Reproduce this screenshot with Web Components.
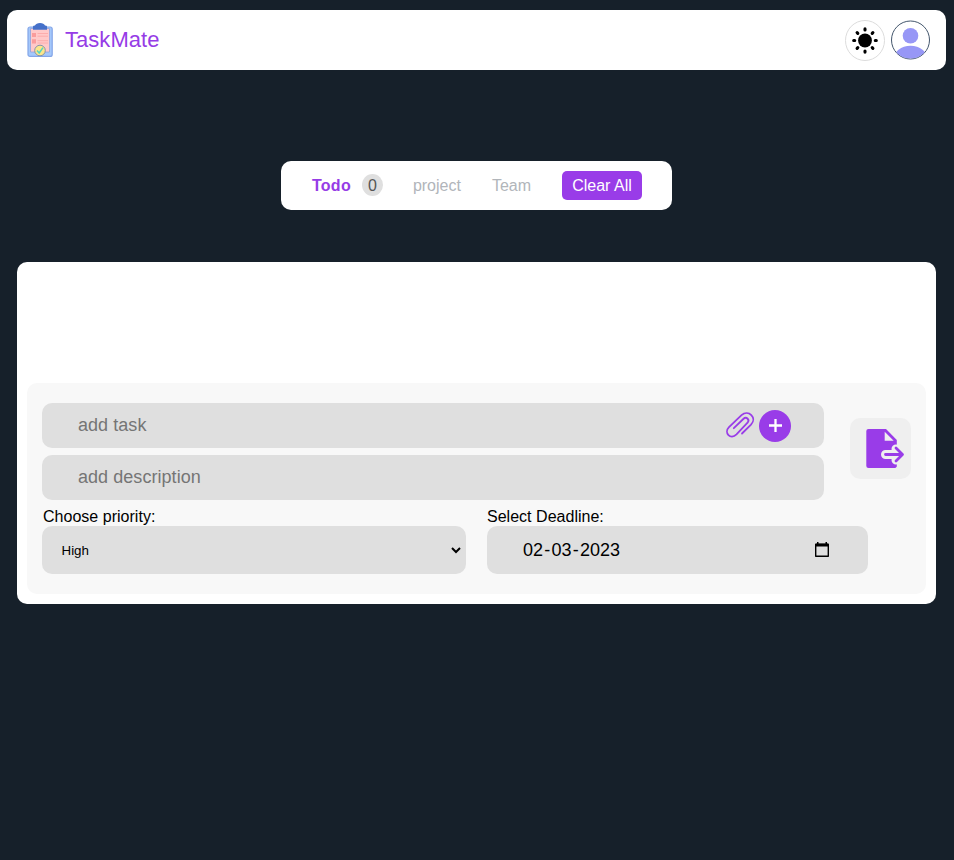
<!DOCTYPE html>
<html lang="en">
<head>
<meta charset="utf-8">
<title>TaskMate</title>
<style>
html,body{margin:0;height:100%}
body{background:#16202a;font-family:"Liberation Sans",Arial,sans-serif;font-size:16px;color:#000;overflow:hidden}
</style>
</head>
<body>
<task-app></task-app>
<script>
const define = (name, html) => {
  const template = document.createElement('template');
  template.innerHTML = html;
  customElements.define(name, class extends HTMLElement {
    constructor() {
      super();
      this.attachShadow({ mode: 'open' }).append(template.content.cloneNode(true));
    }
  });
};

define('app-logo', `
<style>:host{display:block;width:26px;height:36px}svg{display:block}</style>
<svg width="26" height="36" viewBox="0 0 26 36">
  <rect x="1" y="5" width="24.200" height="29.400" rx="2" fill="#a4c8fb" stroke="#84a6e8" stroke-width="1.200"/>
  <path d="M3.500 6.500h19v23.500h-19z" fill="#ffc9c9" stroke="#8fa3dd" stroke-width=".8"/>
  <path d="M6 7.800V4.500Q6 3.500 8 3.500Q9 1 13 1T18 3.500Q20 3.500 20 4.500V7.800z" fill="#4570c9"/>
  <path d="M5 11h4v4H5zM5 17.300h4v4.200H5z" fill="#fa9c9c"/>
  <path d="M10.500 11.500H21M10.500 14.200H21M10.500 18.700H21M10.500 21H21" stroke="#fcacac"/>
  <circle cx="13" cy="28.500" r="5.300" fill="#fce68a" stroke="#8794a8" stroke-width="1"/>
  <path d="M10 28.500l2.200 2.500 3.800-5.400" fill="none" stroke="#55d3c4" stroke-width="1.500"/>
</svg>`);

define('theme-toggle', `
<style>:host{display:block;width:40px;height:41px}svg{display:block}</style>
<svg width="40" height="41" viewBox="0 0 40 41">
  <ellipse cx="20" cy="20.500" rx="19.500" ry="20" fill="#fff" stroke="#dcdcdc"/>
  <circle cx="20" cy="20.500" r="6.900"/>
  <g stroke="#000" stroke-width="3.100" stroke-linecap="round">
    <path d="M20 8.900v1M20 31.100V32.100M8.700 20.500h1M30.300 20.500h1M12.100 12.600l.7.700M27.200 27.700l.7.700M27.900 12.600l-.7.700M12.800 27.700l-.7.700"/>
  </g>
</svg>`);

define('user-avatar', `
<style>:host{display:block;width:40px;height:40px}svg{display:block}</style>
<svg width="40" height="40" viewBox="0 0 40 40">
  <defs><clipPath id="c"><circle cx="19.500" cy="20" r="18.600"/></clipPath></defs>
  <circle cx="19.500" cy="20" r="19" fill="#fff" stroke="#43566c"/>
  <g clip-path="url(#c)" fill="#9797f6"><circle cx="19.500" cy="15.700" r="7.800"/><ellipse cx="19.500" cy="39" rx="17" ry="13.200"/></g>
</svg>`);

define('app-header', `
<style>
:host{display:flex;align-items:center;height:60px;box-sizing:border-box;margin:10px 8px 0 7px;padding:0 15px 0 20px;background:#fff;border-radius:10px}
.name{font-size:22px;line-height:25px;color:#963ce6;margin:0 0 1px 12px;flex:1;letter-spacing:.04px}
theme-toggle{margin-right:6px}
</style>
<app-logo></app-logo><span class="name">TaskMate</span><theme-toggle></theme-toggle><user-avatar></user-avatar>`);

define('task-tab', `
<style>:host{display:flex;align-items:center;color:#b1b5ba;line-height:18px}
:host([active]){color:#963ce6;font-weight:bold;letter-spacing:.25px}</style><slot></slot>`);

define('count-badge', `
<style>:host{display:flex;align-items:center;justify-content:center;box-sizing:border-box;width:21px;height:22px;padding-top:1px;border-radius:50%;background:#dfdfdf;color:#555;font-weight:400;letter-spacing:0;margin:0 -1px 1px 11px}</style><slot></slot>`);

define('clear-button', `
<style>:host{display:flex;align-items:center;justify-content:center;width:80px;height:29px;border-radius:5px;background:#993ce8;color:#fff}</style><slot></slot>`);

define('task-nav', `
<style>:host{display:flex;align-items:center;justify-content:space-between;box-sizing:border-box;width:391px;height:49px;margin:91px 0 0 281px;padding:0 30px 0 31px;background:#fff;border-radius:10px}</style>
<task-tab active>Todo<count-badge>0</count-badge></task-tab><task-tab>project</task-tab><task-tab>Team</task-tab><clear-button>Clear All</clear-button>`);

define('text-field', `
<style>
:host{display:flex;align-items:center;box-sizing:border-box;height:45px;padding:0 33px 0 36px;background:#dfdfdf;border-radius:10px;font-size:18px;color:#757575}
.hint{flex:1;line-height:21px;margin-bottom:1px;letter-spacing:.05px}
</style><span class="hint"><slot></slot></span><slot name="actions"></slot>`);

define('attach-icon', `
<style>:host{display:block;width:30px;height:30px;margin-right:4px}svg{display:block}</style>
<svg width="30" height="30" viewBox="0 0 30 30" fill="none" stroke="#993ce8" stroke-width="1.800" stroke-linecap="round">
  <path d="M8.800 17.200L18.300 8C21.500 5 25.300 9 22.300 12L11.500 23.400C5.500 29.200-1.500 21.800 4 16.200L16.500 4.200C23.500-2 32.500 6.800 26 13.600L17 22.500"/>
</svg>`);

define('add-icon', `
<style>:host{display:block;width:32px;height:32px}svg{display:block}</style>
<svg width="32" height="32" viewBox="0 0 32 32"><circle cx="16" cy="16" r="16" fill="#993ce8"/><path d="M16.500 9v13M10 15.500h13" stroke="#fff" stroke-width="2.300"/></svg>`);

define('submit-button', `
<style>:host{display:flex;align-items:center;justify-content:center;width:61px;height:61px;border-radius:10px;background:#efefef}svg{display:block}</style>
<svg width="61" height="61" viewBox="0 0 61 61">
  <path d="M18.500 11H36L46.800 22V48.500Q46 50 44.500 50H18.500Q16.300 50 16.300 48V13Q16.300 11 18.500 11z" fill="#993ce8"/>
  <path d="M34.700 13.800V22.800H43.700z" fill="#efefef"/>
  <path d="M35.500 36.500H51M46 31L51.500 36.500L46 42" fill="none" stroke="#efefef" stroke-width="9" stroke-linecap="round" stroke-linejoin="round"/>
  <path d="M35.500 36.500H52M46 30L52.500 36.500L46 43" fill="none" stroke="#993ce8" stroke-width="2.800" stroke-linecap="round" stroke-linejoin="round"/>
</svg>`);

define('priority-select', `
<style>
:host{display:block;width:424px}
label{display:block;line-height:20px;margin-left:1px;height:19px;letter-spacing:.02px}
.box{display:flex;align-items:center;justify-content:space-between;box-sizing:border-box;height:48px;padding:0 5px 0 19.500px;background:#dfdfdf;border-radius:10px;font-size:13.333px}
</style>
<label>Choose priority:</label>
<div class="box"><span>High</span><svg width="10" height="8" viewBox="0 0 10 8"><path d="M1 2L5 6L9 2" fill="none" stroke="#000" stroke-width="2"/></svg></div>`);

define('deadline-picker', `
<style>
:host{display:block;width:381px}
label{display:block;line-height:20px;height:19px;letter-spacing:.02px}
.box{display:flex;align-items:center;justify-content:space-between;box-sizing:border-box;height:48px;padding:0 37px 0 36px;background:#dfdfdf;border-radius:10px;font-size:18px}
.sep{display:inline-block;width:8.500px;text-align:center}
</style>
<label>Select Deadline:</label>
<div class="box"><span>02<span class="sep">-</span>03<span class="sep">-</span>2023</span>
<svg width="18" height="18" viewBox="0 0 18 18"><path d="M2.700 3.500H15.300V15.300H2.700z" fill="none" stroke="#000" stroke-width="1.400" stroke-linejoin="round"/><path d="M2.500 2.500h13v3h-13zM4 1h1.500v3H4zM12.500 1H14v3h-1.500z"/></svg></div>`);

define('task-form', `
<style>
:host{display:block;box-sizing:border-box;height:211px;padding:20px 15px;background:#f8f8f8;border-radius:10px}
.top{display:flex;justify-content:space-between}
.fields{display:grid;gap:7px;width:782px}
submit-button{margin-top:15px}
.bottom{display:flex;gap:21px;margin-top:7px}
</style>
<div class="top"><div class="fields">
<text-field>add task<attach-icon slot="actions"></attach-icon><add-icon slot="actions"></add-icon></text-field>
<text-field>add description</text-field>
</div><submit-button></submit-button></div>
<div class="bottom"><priority-select></priority-select><deadline-picker></deadline-picker></div>`);

define('task-panel', `
<style>:host{display:flex;flex-direction:column;justify-content:flex-end;box-sizing:border-box;height:342px;margin:52px 18px 0 17px;padding:10px;background:#fff;border-radius:10px}</style><slot></slot>`);

define('task-app', `
<style>:host{display:flow-root}</style>
<app-header></app-header><task-nav></task-nav><task-panel><task-form></task-form></task-panel>`);
</script>
</body>
</html>
